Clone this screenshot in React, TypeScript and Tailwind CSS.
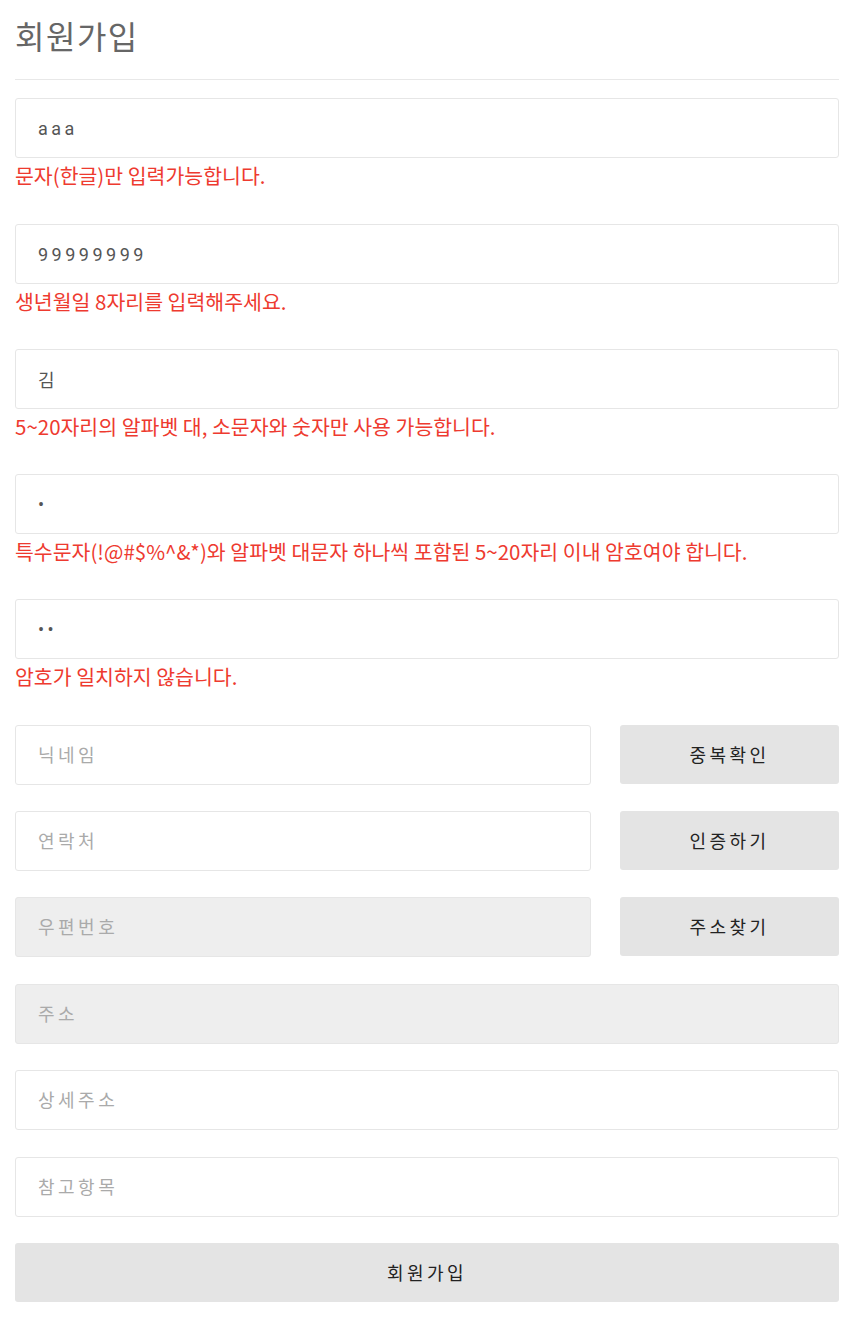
import { ReactNode } from "react";

const KR = "font-['Noto_Sans_CJK_KR',sans-serif]";
const INPUT_FONT = "font-['Roboto','Noto_Sans_CJK_KR',sans-serif]";

type FieldProps = {
  value?: string;
  placeholder?: string;
  type?: string;
  disabled?: boolean;
  className?: string;
};

function Field({ value, placeholder, type = "text", disabled, className }: FieldProps) {
  const bg = disabled ? "bg-[#eeeeee]" : "bg-white";
  return (
    <input
      type={type}
      defaultValue={value}
      placeholder={placeholder}
      readOnly
      className={`${INPUT_FONT} ${bg} ${className || "w-full"} h-[60px] border border-[#e6e6e6] rounded-[3px] pl-[22px] pr-3 text-[18px] tracking-[3.5px] text-[#555] placeholder:text-[#aaa] outline-none`}
    />
  );
}

function ErrorField({
  value,
  type,
  message,
  className = "pb-[34px]",
}: {
  value: string;
  type?: string;
  message: string;
  className?: string;
}) {
  return (
    <div className={className}>
      <Field value={value} type={type} />
      <p className={`${KR} mt-[3px] leading-[28px] text-[20.5px] text-[#ee3a2f]`}>{message}</p>
    </div>
  );
}

function GrayButton({ children, className }: { children: ReactNode; className?: string }) {
  return (
    <button
      type="button"
      className={`${KR} ${className || ""} h-[59px] bg-[#e4e4e4] rounded-[3px] text-[18px] tracking-[3.5px] text-[#222]`}
    >
      {children}
    </button>
  );
}

function Row({ placeholder, button, disabled }: { placeholder: string; button: string; disabled?: boolean }) {
  return (
    <div className="flex items-start justify-between">
      <Field placeholder={placeholder} disabled={disabled} className="w-[576px]" />
      <GrayButton className="w-[219px]">{button}</GrayButton>
    </div>
  );
}

export default function App() {
  return (
    <div className="min-h-[1320px] bg-white">
      <div className="ml-[15px] w-[824px]">
        <h1
          className={`${KR} pt-[20px] pb-[29px] leading-[30px] text-[32px] tracking-[1.5px] text-[#666] border-b border-[#e8e8e8]`}
        >
          회원가입
        </h1>

        <div className="pt-[18px]">
          <ErrorField value="aaa" message="문자(한글)만 입력가능합니다." className="pb-[35px]" />
          <ErrorField value="99999999" message="생년월일 8자리를 입력해주세요." />
          <ErrorField value="김" message="5~20자리의 알파벳 대, 소문자와 숫자만 사용 가능합니다." />
          <ErrorField
            value="a"
            type="password"
            message="특수문자(!@#$%^&*)와 알파벳 대문자 하나씩 포함된 5~20자리 이내 암호여야 합니다."
          />
          <ErrorField value="aa" type="password" message="암호가 일치하지 않습니다." className="pb-[35px]" />
        </div>

        <div className="flex flex-col">
          <Row placeholder="닉네임" button="중복확인" />
          <div className="pt-[26px]">
            <Row placeholder="연락처" button="인증하기" />
          </div>
          <div className="pt-[26px]">
            <Row placeholder="우편번호" button="주소찾기" disabled />
          </div>
          <div className="pt-[27px]">
            <Field placeholder="주소" disabled />
          </div>
          <div className="pt-[26px]">
            <Field placeholder="상세주소" />
          </div>
          <div className="pt-[27px]">
            <Field placeholder="참고항목" />
          </div>
          <GrayButton className="mt-[26px] w-full">회원가입</GrayButton>
        </div>
      </div>
    </div>
  );
}
